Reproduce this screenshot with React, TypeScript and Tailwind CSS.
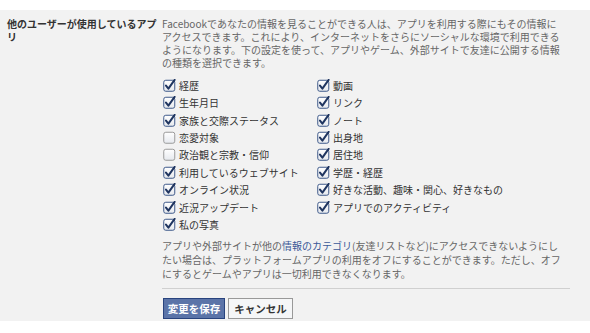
import React from "react";

const left = [
  { label: "経歴", on: true },
  { label: "生年月日", on: true },
  { label: "家族と交際ステータス", on: true },
  { label: "恋愛対象", on: false },
  { label: "政治観と宗教・信仰", on: false },
  { label: "利用しているウェブサイト", on: true },
  { label: "オンライン状況", on: true },
  { label: "近況アップデート", on: true },
  { label: "私の写真", on: true },
];
const right = [
  "動画",
  "リンク",
  "ノート",
  "出身地",
  "居住地",
  "学歴・経歴",
  "好きな活動、趣味・関心、好きなもの",
  "アプリでのアクティビティ",
];

function Box({ on }: { on: boolean }) {
  return (
    <svg width="13" height="13" viewBox="0 0 13 13" className="shrink-0">
      <defs>
        <linearGradient id="bg" x1="0" y1="0" x2="0" y2="1">
          <stop offset="0" stopColor="#ffffff" />
          <stop offset="1" stopColor="#e6e9ee" />
        </linearGradient>
      </defs>
      <rect
        x="0.75"
        y="1.25"
        width="11"
        height="11"
        rx="2"
        fill="url(#bg)"
        stroke={on ? "#3f5a8a" : "#9a9a9a"}
        strokeWidth="1"
      />
      {on && (
        <path
          d="M3 6.6 L5.4 9.6 L11.6 0.9"
          fill="none"
          stroke="#1f3560"
          strokeWidth="2"
          strokeLinecap="round"
          strokeLinejoin="round"
        />
      )}
    </svg>
  );
}

function Row({ label, on }: { label: string; on: boolean }) {
  return (
    <div className="flex h-[17.4px] items-center gap-[3px] text-[#333]">
      <Box on={on} />
      <span className="whitespace-nowrap">{label}</span>
    </div>
  );
}

export default function App() {
  return (
    <div
      className="w-[590px] h-[333px] bg-white pt-[10px] overflow-hidden text-[10px]"
      style={{ fontFamily: '"Noto Sans CJK JP", "Liberation Sans", sans-serif' }}
    >
      <div className="flex h-[311px] bg-[#f2f2f2]">
        <div className="w-[162px] shrink-0 pl-[7px] pr-[4px] pt-[6.5px] text-[10px] font-bold leading-[13.3px] text-[#333]">
          他のユーザーが使用しているアプリ
        </div>
        <div className="flex w-[410px] flex-col pt-[6.5px]">
          <p className="whitespace-nowrap leading-[13.3px] text-[#666]">
            Facebookであなたの情報を見ることができる人は、アプリを利用する際にもその情報に
            <br />
            アクセスできます。これにより、インターネットをさらにソーシャルな環境で利用できる
            <br />
            ようになります。下の設定を使って、アプリやゲーム、外部サイトで友達に公開する情報
            <br />
            の種類を選択できます。
          </p>
          <div className="mt-[7px] grid grid-cols-[154px_1fr] pl-[1px]">
            <div className="flex flex-col">
              {left.map((r) => (
                <Row key={r.label} label={r.label} on={r.on} />
              ))}
            </div>
            <div className="flex flex-col">
              {right.map((r) => (
                <Row key={r} label={r} on={true} />
              ))}
            </div>
          </div>
          <p className="mt-[6px] whitespace-nowrap leading-[14px] text-[#666]">
            アプリや外部サイトが他の
            <span className="text-[#3b5998]">情報のカテゴリ</span>
            (友達リストなど)にアクセスできないようにし
            <br />
            たい場合は、プラットフォームアプリの利用をオフにすることができます。ただし、オフ
            <br />
            にするとゲームやアプリは一切利用できなくなります。
          </p>
          <div className="mt-[7px] h-px w-[408px] bg-[#d0d0d0]" />
          <div className="mt-[9px] flex gap-[3px] pl-[1px]">
            <button className="flex h-[21px] w-[62px] items-center justify-center border border-[#29447e] bg-[#5b74a8] text-[10.5px] font-bold text-white">
              変更を保存
            </button>
            <button className="flex h-[21px] w-[65px] items-center justify-center border border-[#999] bg-[#f5f6f7] text-[10.5px] font-bold text-[#333]">
              キャンセル
            </button>
          </div>
        </div>
      </div>
    </div>
  );
}
